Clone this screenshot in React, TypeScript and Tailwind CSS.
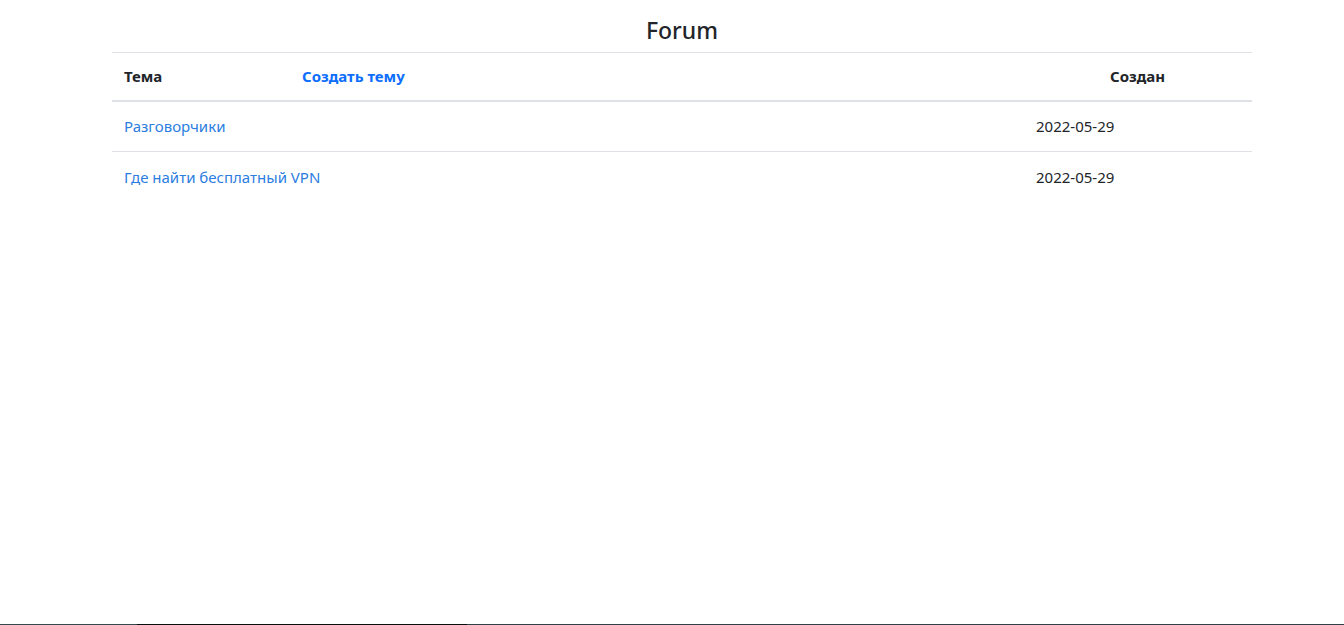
const topics = [
  { title: "Разговорчики", created: "2022-05-29" },
  { title: "Где найти бесплатный VPN", created: "2022-05-29" },
];

export default function App() {
  return (
    <div className="h-[625px] flex flex-col bg-white text-[#212529] font-['Noto_Sans',sans-serif]">
      <div className="flex-1">
        <div className="w-[1140px] ml-[112px]">
          <h1 className="text-center text-[23px] font-medium leading-[28px] pt-[16px] pb-[8px]">Forum</h1>

          <div className="border-t border-[#dee2e6]">
            {/* header */}
            <div className="flex items-center h-[49px] text-[15px] font-bold border-b-2 border-[#dee2e6]">
              <div className="w-[178px] px-[12px]">Тема</div>
              <div className="flex-1 px-[12px]">
                <a href="#" className="text-[#0d6efd]">Создать тему</a>
              </div>
              <div className="w-[154px] px-[12px]">Создан</div>
            </div>

            {topics.map((t, i) => (
              <div
                key={i}
                className={
                  i < topics.length - 1
                    ? "flex items-center h-[50px] text-[15px] border-b border-[#dee2e6]"
                    : "flex items-center h-[50px] text-[15px]"
                }
              >
                <div className="flex-1 px-[12px]">
                  <a href="#" className="text-[#2b7ddf]">{t.title}</a>
                </div>
                <div className="w-[228px] px-[12px]">{t.created}</div>
              </div>
            ))}
          </div>
        </div>
      </div>
      <div className="h-[1px] flex">
        <div className="w-[137px] bg-[#34484f]" />
        <div className="w-[330px] bg-[#0b0d0e]" />
        <div className="flex-1 bg-[#2f4147]" />
      </div>
    </div>
  );
}
